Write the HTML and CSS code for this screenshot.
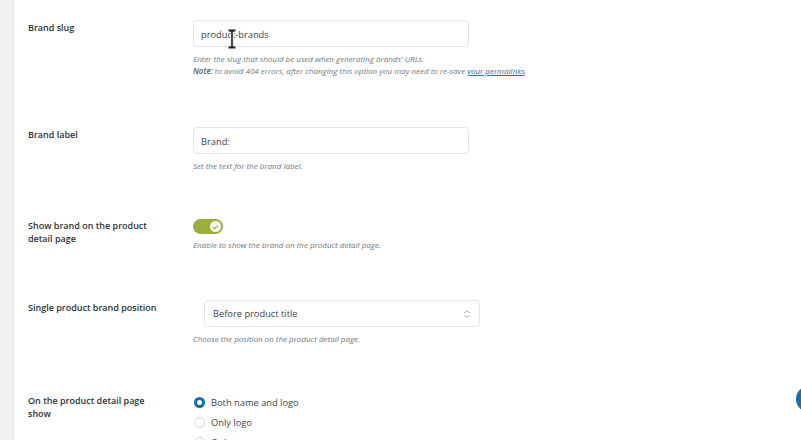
FILE: index.html
```html
<!DOCTYPE html>
<html>
<head>
<meta charset="utf-8">
<link rel="stylesheet" href="styles.css">
</head>
<body>
<div class="page">
  <div class="sidebar"></div>
  <div class="main">
    <div class="row row-slug">
      <div class="label">Brand slug</div>
      <div class="field">
        <div class="input">produc<span class="cursor-anchor"><svg class="ibeam" width="10" height="22" viewBox="0 0 10 22"><path d="M1 1h8v3H6.3v14H9v3H1v-3h2.7V4H1z" fill="#222" stroke="#fff" stroke-width="1"/></svg></span>t-brands</div>
        <p class="desc">Enter the slug that should be used when generating brands' URLs.</p>
        <p class="desc"><b>Note:</b> to avoid 404 errors, after changing this option you may need to re-save <a href="#">your permalinks</a>.</p>
      </div>
    </div>
    <div class="row row-label">
      <div class="label">Brand label</div>
      <div class="field">
        <div class="input">Brand:</div>
        <p class="desc">Set the text for the brand label.</p>
      </div>
    </div>
    <div class="row row-toggle">
      <div class="label">Show brand on the product detail page</div>
      <div class="field">
        <div class="toggle"><span class="knob"><svg width="7" height="6" viewBox="0 0 7 6"><path d="M1 3.2l1.6 1.5L6 1.3" fill="none" stroke="#97a93a" stroke-width="1.2"/></svg></span></div>
        <p class="desc">Enable to show the brand on the product detail page.</p>
      </div>
    </div>
    <div class="row row-select">
      <div class="label">Single product brand position</div>
      <div class="field">
        <div class="select"><span>Before product title</span><svg width="8" height="10" viewBox="0 0 8 10"><path d="M1.5 4L4 1.5 6.5 4M1.5 6L4 8.5 6.5 6" fill="none" stroke="#8c8f94" stroke-width="0.8"/></svg></div>
        <p class="desc">Choose the position on the product detail page.</p>
      </div>
    </div>
    <div class="row row-radio">
      <div class="label">On the product detail page show</div>
      <div class="field">
        <label class="radio"><span class="dot checked"></span>Both name and logo</label>
        <label class="radio"><span class="dot"></span>Only logo</label>
        <label class="radio"><span class="dot"></span>Only name</label>
      </div>
    </div>
  </div>
</div>
<div class="fab"></div>
</body>
</html>
```
FILE: styles.css
```css
html, body {
  margin: 0;
  padding: 0;
  background: #fff;
  overflow: hidden;
}
body {
  width: 801px;
  height: 440px;
  font-family: "Open Sans", "Noto Sans", sans-serif;
  color: #1d2327;
}
.page {
  display: flex;
  height: 440px;
  overflow: hidden;
}
.sidebar {
  width: 13px;
  flex: none;
  background: #f0f0f1;
  border-right: 1px solid #e4e4e6;
}
.main {
  flex: 1;
  padding-left: 14px;
}
.row {
  display: grid;
  grid-template-columns: 165px 420px;
}
.label {
  font-size: 9px;
  font-weight: 600;
  line-height: 13px;
  width: 130px;
  color: #2c3338;
}
.row-slug { margin-top: 20px; }
.row-slug .label { padding-top: 1px; }
.row-label { margin-top: 50px; }
.row-label .label { padding-top: 1px; }
.row-toggle { margin-top: 47px; }
.row-select { margin-top: 49px; }
.row-select .label { padding-top: 1px; width: 150px; }
.row-radio { margin-top: 52px; }
.row-radio .label { margin-top: -3px; }

.input {
  box-sizing: border-box;
  width: 276px;
  height: 27px;
  border: 1px solid #e2e4e7;
  border-radius: 4px;
  padding: 2px 7px 0;
  font-size: 9.3px;
  line-height: 23px;
  color: #3c434a;
}
.cursor-anchor {
  position: relative;
  display: inline-block;
  width: 0;
}
.ibeam {
  position: absolute;
  left: -5px;
  top: -10px;
}
.desc {
  margin: 0;
  font-size: 8px;
  font-style: italic;
  line-height: 12px;
  color: #72777c;
  white-space: nowrap;
}
.input + .desc, .select + .desc { margin-top: 6px; }
.toggle + .desc { margin-top: 5px; }
.desc b { font-weight: 600; color: #50575e; }
.desc a { color: #2271b1; }
.toggle {
  width: 30px;
  height: 15px;
  border-radius: 8px;
  background: #9bad3d;
  position: relative;
}
.knob {
  position: absolute;
  right: 2px;
  top: 2px;
  width: 11px;
  height: 11px;
  border-radius: 50%;
  background: #fff;
  display: flex;
  align-items: center;
  justify-content: center;
}
.select {
  box-sizing: border-box;
  width: 276px;
  height: 27px;
  margin-left: 11px;
  border: 1px solid #e2e4e7;
  border-radius: 4px;
  padding: 0 8px;
  display: flex;
  align-items: center;
  justify-content: space-between;
  font-size: 9.3px;
  color: #3c434a;
}
.radio {
  display: flex;
  align-items: center;
  height: 20px;
  font-size: 9.3px;
  color: #3c434a;
}
.radio:first-child { margin-top: -5px; }
.dot {
  box-sizing: border-box;
  width: 11px;
  height: 11px;
  border-radius: 50%;
  border: 1px solid #d5d7da;
  margin: 0 6px 0 1px;
  background: #fff;
}
.dot.checked {
  border: 3px solid #136fa0;
}
.fab {
  position: absolute;
  left: 796px;
  top: 386px;
  width: 26px;
  height: 26px;
  border-radius: 50%;
  background: #0f72a8;
}
```
